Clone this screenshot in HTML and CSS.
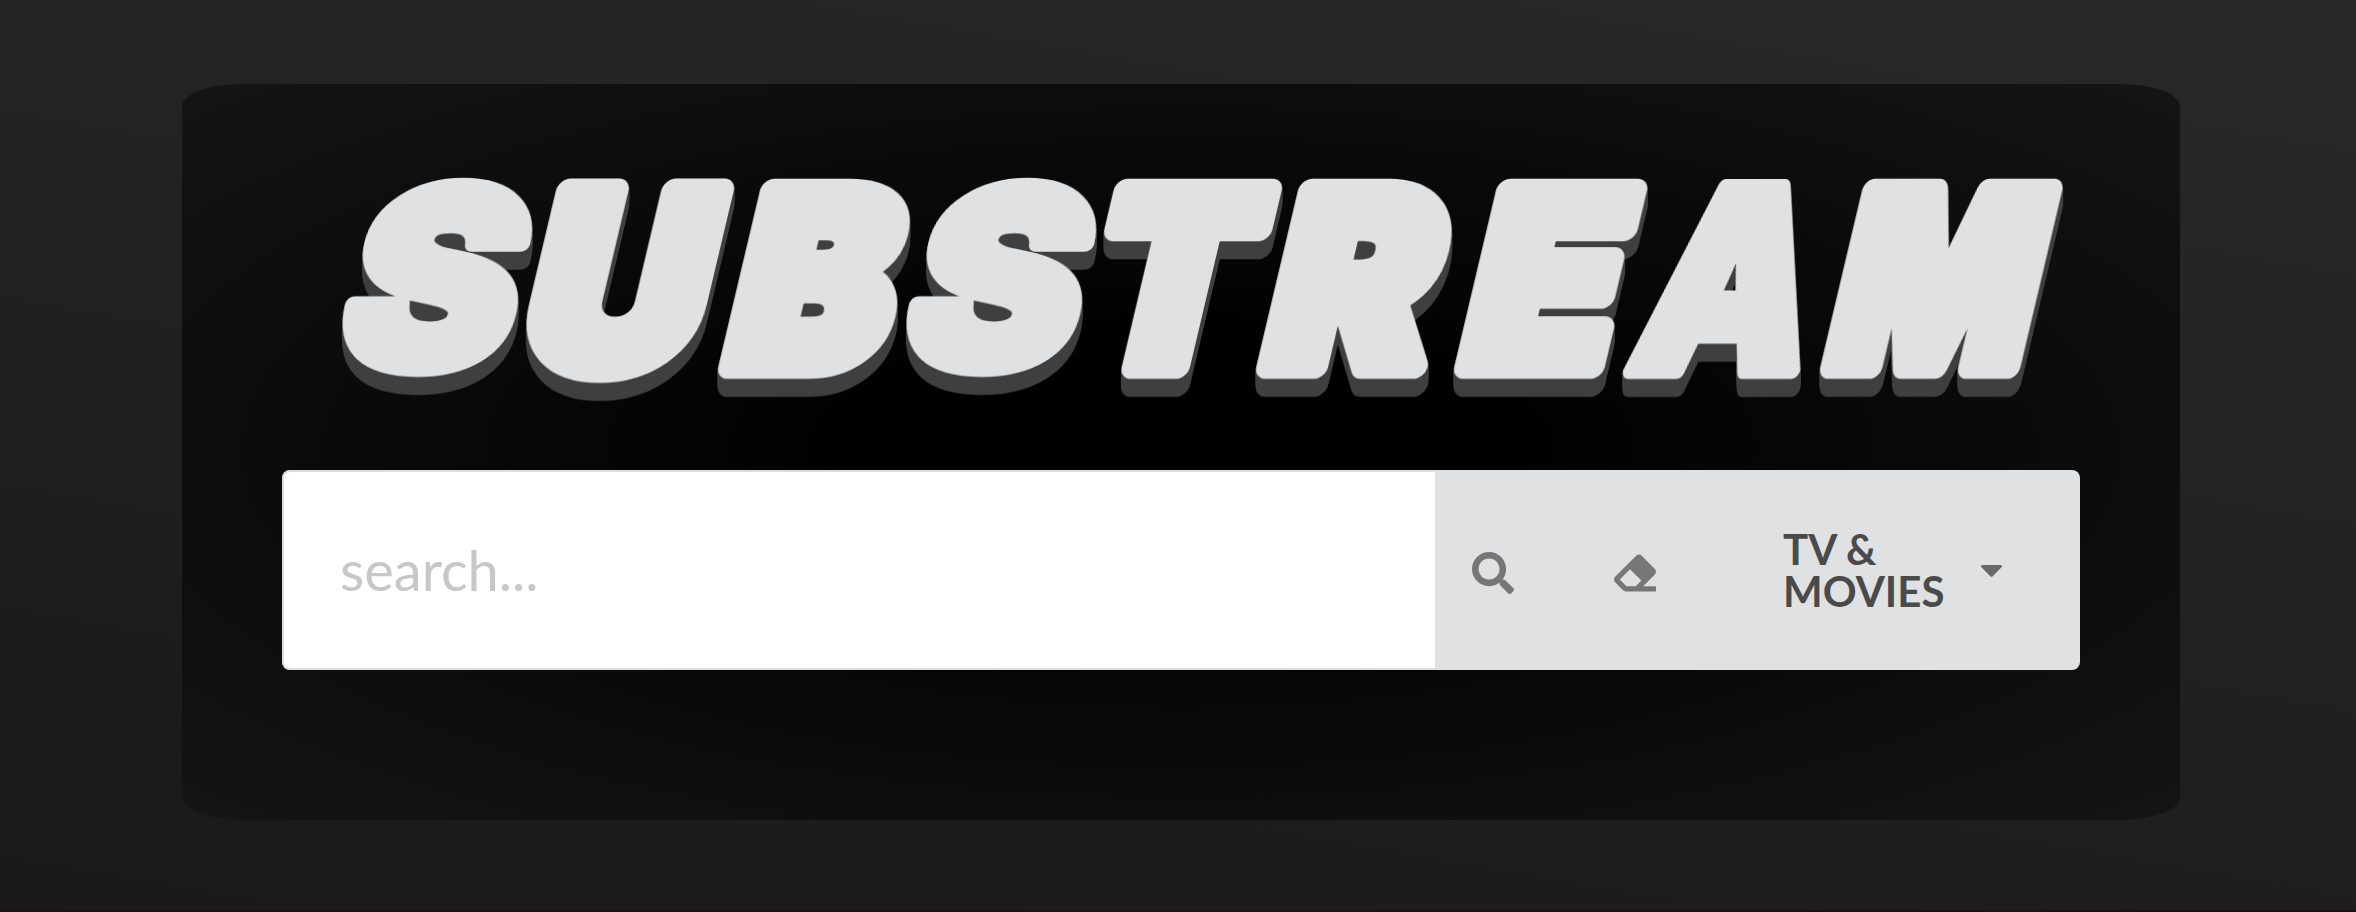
FILE: index.html
```
<!DOCTYPE html>
<html lang="en">
<head>
<meta charset="utf-8">
<title>Substream</title>
<link rel="stylesheet" href="styles.css">
</head>
<body>
<main class="hero">
  <h1 class="brand">
    <svg class="wordmark" viewBox="0 0 1798 260" role="img" aria-label="SUBSTREAM">
      <g transform="translate(0 205) skewX(-13.3)">
        <text class="open" transform="translate(49 0) scale(1.02 .972)">S</text>
        <text transform="translate(233 2) scale(1.01 1.01)">U</text>
        <text transform="translate(437 0) scale(.98 1)">B</text>
        <text class="open" transform="translate(613 0) scale(1.02 .972)">S</text>
        <text transform="translate(795 0) scale(.95 1)">T</text>
        <text transform="translate(975 0) scale(1 1)">R</text>
        <text transform="translate(1173 0) scale(1 1)">E</text>
        <text class="open" transform="translate(1344 4) scale(.86 1)">A</text>
        <text transform="translate(1539 0) scale(.86 1)">M</text>
      </g>
    </svg>
  </h1>
  <form class="search">
    <input class="search-input" type="text" placeholder="search..." aria-label="Search">
    <button class="icon-button search-button" type="button" aria-label="Search">
      <svg class="icon" viewBox="0 0 512 512"><path d="M505 442.700 405.300 343c-4.500-4.500-10.600-7-17-7H372c27.600-35.300 44-79.700 44-128C416 93.100 322.900 0 208 0S0 93.100 0 208s93.100 208 208 208c48.300 0 92.700-16.400 128-44v16.300c0 6.400 2.500 12.500 7 17l99.700 99.700c9.400 9.400 24.600 9.400 33.900 0l28.300-28.300c9.400-9.400 9.400-24.600.1-34zM208 336c-70.700 0-128-57.200-128-128 0-70.700 57.200-128 128-128 70.700 0 128 57.200 128 128 0 70.700-57.200 128-128 128z"/></svg>
    </button>
    <button class="icon-button erase-button" type="button" aria-label="Clear">
      <svg class="icon" viewBox="0 0 512 512"><path d="M497.941 273.941c18.745-18.745 18.745-49.137 0-67.882l-160-160c-18.745-18.745-49.136-18.746-67.883 0l-256 256c-18.745 18.745-18.745 49.137 0 67.882l96 96A48.004 48.004 0 0 0 144 480h356c6.627 0 12-5.373 12-12v-40c0-6.627-5.373-12-12-12H355.883l142.058-142.059zm-302.627-62.627l137.373 137.373L265.373 416H150.628l-80-80 124.686-124.686z"/></svg>
    </button>
    <div class="dropdown">
      <span class="dropdown-label">TV &amp; MOVIES</span>
      <svg class="caret" viewBox="0 0 21 12"><path d="M1.200 0h18.600q2 .9.500 2.500l-8.800 8.900q-1 .9-2 0L.7 2.500Q-.8.900 1.200 0z"/></svg>
    </div>
  </form>
</main>
</body>
</html>
```
FILE: styles.css
```
* { box-sizing: border-box; }

body {
  margin: 0;
  height: 912px;
  padding: 84px 176px 0 182px;
  overflow: hidden;
  background: linear-gradient(190deg, #292929 0%, #191919 100%);
  border-bottom: 2px solid #1a1218;
  font-family: Lato, sans-serif;
}

.hero {
  width: 1998px;
  height: 736px;
  padding: 78px 100px 0;
  border-radius: 3%;
  background: radial-gradient(ellipse farthest-corner at 50% 50%, #000 0%, #000 20%, #151515 100%);
}

.brand { margin: 0; height: 308px; }

.wordmark {
  display: block;
  width: 1798px;
  height: 260px;
  overflow: visible;
  filter: drop-shadow(0 1px #3f3f3f) drop-shadow(0 2px #3f3f3f) drop-shadow(0 4px #3f3f3f) drop-shadow(0 8px #3f3f3f) drop-shadow(0 3px #3f3f3f);
}

.wordmark text {
  font-family: Inter, sans-serif;
  font-weight: 900;
  font-size: 242px;
  fill: #e0e1e2;
  stroke: #e0e1e2;
  stroke-width: 24px;
  stroke-linejoin: round;
}

.wordmark .open {
  font-size: 253px;
  stroke-width: 16px;
}

.search {
  display: flex;
  width: 1798px;
  height: 200px;
  margin: 0;
  border-radius: 8px;
  overflow: hidden;
  background: #e0e1e2;
}

.search-input {
  width: 1153px;
  height: 200px;
  padding: 0 57px 2px 56px;
  border: 2px solid #dedede;
  border-right: 0;
  border-radius: 8px 0 0 8px;
  background: #fff;
  font: 56px Lato, sans-serif;
  outline: none;
}

.search-input::placeholder { color: #c7c7c7; opacity: 1; }

.icon-button {
  display: flex;
  align-items: center;
  border: 0;
  background: transparent;
}

.search-button { width: 143px; padding: 6px 0 0 37px; }
.erase-button { width: 142px; padding: 6px 0 0 36px; }

.icon { width: 42px; height: 42px; fill: #777; }

.dropdown {
  display: flex;
  flex: 1;
  align-items: center;
  padding-left: 63px;
}

.dropdown-label {
  width: 198px;
  color: #4a4a4a;
  font-size: 42px;
  font-weight: 700;
  line-height: 42px;
}

.caret { width: 21px; height: 12px; margin-top: 2px; fill: #696969; }
```
